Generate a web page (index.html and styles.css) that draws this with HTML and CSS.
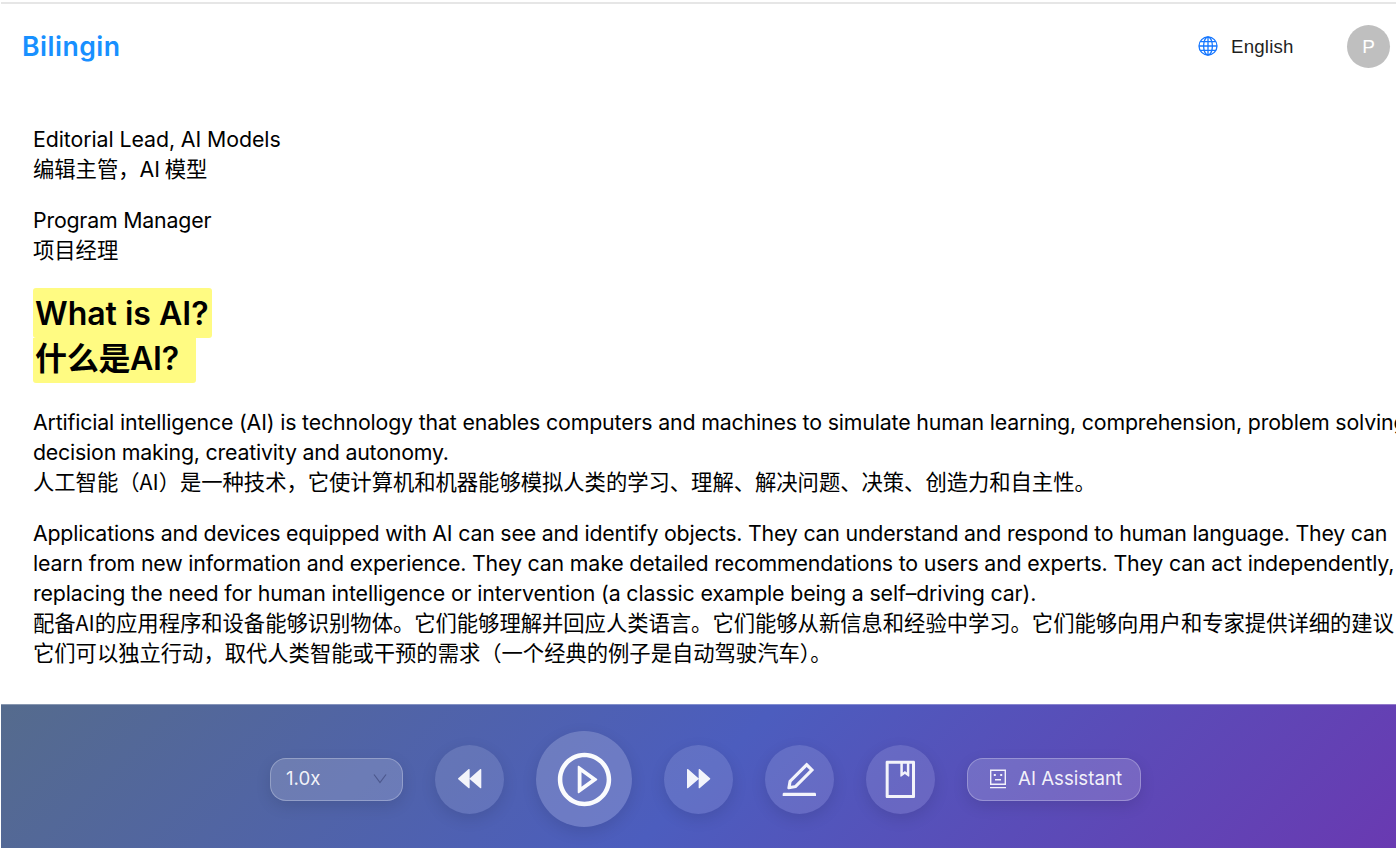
FILE: index.html
```html
<!DOCTYPE html>
<html lang="en">
<head>
  <meta charset="UTF-8" />
  <meta name="viewport" content="width=device-width, initial-scale=1" />
  <title>Bilingin</title>
  <link rel="stylesheet" href="styles.css">
</head>
<body>
  <div class="page">

    <header class="topbar">
      <a class="logo">Bilingin</a>
      <div class="topbar-right">
        <svg class="globe" viewBox="0 0 20 20" fill="none" stroke="currentColor" stroke-width="1.3">
          <circle cx="10" cy="10" r="9"/>
          <ellipse cx="10" cy="10" rx="4.4" ry="9"/>
          <path d="M10 1v18M1 10h18M2.6 5.6h14.8M2.6 14.4h14.8"/>
        </svg>
        <span class="language">English</span>
        <span class="avatar">P</span>
      </div>
    </header>

    <main class="article">
      <p>
        <span class="line l1">Editorial Lead, AI Models</span>
        <span class="line zh">编辑主管，<span class="ai">AI</span> 模型</span>
      </p>
      <p>
        <span class="line l2">Program Manager</span>
        <span class="line zh">项目经理</span>
      </p>
      <h2>
        <span class="mark mark-en">What is AI?</span>
        <span class="mark mark-zh">什么是AI?</span>
      </h2>
      <p>
        <span class="line l3">Artificial intelligence (AI) is technology that enables computers and machines to simulate human learning, comprehension, problem solving,</span>
        <span class="line l4">decision making, creativity and autonomy.</span>
        <span class="line zh">人工智能（AI）是一种技术，它使计算机和机器能够模拟人类的学习、理解、解决问题、决策、创造力和自主性。</span>
      </p>
      <p>
        <span class="line l5">Applications and devices equipped with AI can see and identify objects. They can understand and respond to human language. They can</span>
        <span class="line l6">learn from new information and experience. They can make detailed recommendations to users and experts. They can act independently,</span>
        <span class="line l7">replacing the need for human intelligence or intervention (a classic example being a self–driving car).</span>
        <span class="line zh">配备AI的应用程序和设备能够识别物体。它们能够理解并回应人类语言。它们能够从新信息和经验中学习。它们能够向用户和专家提供详细的建议</span>
        <span class="line zh">它们可以独立行动，取代人类智能或干预的需求（一个经典的例子是自动驾驶汽车）。</span>
      </p>
    </main>

    <footer class="player">
      <button class="speed">
        <span>1.0x</span>
        <svg viewBox="0 0 14 12" fill="none" stroke="currentColor" stroke-width="1.2"><path d="M1 1.5l6 8 6-8"/></svg>
      </button>
      <button class="round">
        <svg class="icon-skip" viewBox="0 0 1024 1024"><path d="M485.6 249.9L198.2 498c-8.3 7.1-8.3 20.8 0 27.9l287.4 248.2c10.7 9.2 26.4.9 26.4-14V263.8c0-14.8-15.7-23.2-26.4-13.9zm320 0L518.2 498a18.6 18.6 0 00-6.2 14c0 5.2 2.1 10.4 6.2 14l287.4 248.2c10.7 9.2 26.4.9 26.4-14V263.8c0-14.8-15.7-23.2-26.4-13.9z"/></svg>
      </button>
      <button class="round play">
        <svg class="icon-play" viewBox="0 0 1024 1024"><path d="M512 64C264.6 64 64 264.6 64 512s200.6 448 448 448 448-200.6 448-448S759.4 64 512 64zm0 820c-205.4 0-372-166.6-372-372s166.6-372 372-372 372 166.6 372 372-166.6 372-372 372z"/><path d="M719.4 499.1l-296.1-215A15.9 15.9 0 00398 297v430c0 13.1 14.8 20.5 25.3 12.9l296.1-215a15.9 15.9 0 000-25.8zm-257.6 134V390.9L628.5 512 461.8 633.1z"/></svg>
      </button>
      <button class="round">
        <svg class="icon-skip flip" viewBox="0 0 1024 1024"><path d="M485.6 249.9L198.2 498c-8.3 7.1-8.3 20.8 0 27.9l287.4 248.2c10.7 9.2 26.4.9 26.4-14V263.8c0-14.8-15.7-23.2-26.4-13.9zm320 0L518.2 498a18.6 18.6 0 00-6.2 14c0 5.2 2.1 10.4 6.2 14l287.4 248.2c10.7 9.2 26.4.9 26.4-14V263.8c0-14.8-15.7-23.2-26.4-13.9z"/></svg>
      </button>
      <button class="round">
        <svg class="icon-tool" viewBox="0 0 1024 1024"><path d="M257.7 752c2 0 4-.2 6-.5L431.9 722c2-.4 3.9-1.3 5.3-2.8l423.9-423.9a9.96 9.96 0 000-14.1L694.9 114.9c-1.9-1.9-4.4-2.9-7.1-2.9s-5.2 1-7.1 2.9L256.8 538.8c-1.5 1.5-2.4 3.3-2.8 5.3l-29.5 168.2a33.5 33.5 0 009.4 29.8c6.6 6.4 14.9 9.9 23.8 9.9zm67.4-174.4L687.8 215l73.3 73.3-362.7 362.6-88.9 15.7 15.6-89zM880 836H144c-17.7 0-32 14.3-32 32v36c0 4.4 3.6 8 8 8h784c4.4 0 8-3.6 8-8v-36c0-17.7-14.3-32-32-32z"/></svg>
      </button>
      <button class="round">
        <svg class="icon-tool" viewBox="0 0 1024 1024"><path d="M832 64H192c-17.7 0-32 14.3-32 32v832c0 17.7 14.3 32 32 32h640c17.7 0 32-14.3 32-32V96c0-17.7-14.3-32-32-32zm-260 72h96v209.9L621.5 312 572 347.4V136zm220 752H232V136h280v296.9c0 3.3 1 6.6 3 9.3a15.9 15.9 0 0022.3 3.7l83.8-59.9 81.4 59.4c2.7 2 6 3.1 9.4 3.1 8.8 0 16-7.2 16-16V136h64v752z"/></svg>
      </button>
      <button class="assistant">
        <svg class="icon-robot" viewBox="0 0 18 20" fill="none" stroke="currentColor" stroke-width="1.4">
          <path d="M1.7 1.2h14.6v14H1.7zM1 18.6h16M6 10.7h6"/>
          <path d="M4.8 6h2M11.2 6h2" stroke-width="2"/>
        </svg>
        <span>AI Assistant</span>
      </button>
    </footer>

  </div>
</body>
</html>
```
FILE: styles.css
```css
*{box-sizing:border-box;margin:0;padding:0}
html,body{height:100%;overflow:hidden}
body{
  background:#fff;
  color:#000;
  font-family:Inter,"Noto Sans CJK SC",sans-serif;
}
.page{
  width:1409px;
  height:848px;
  margin-left:1px;
  padding-top:2px;
  display:flex;
  flex-direction:column;
}

/* header */
.topbar{
  height:87px;
  border-top:2px solid #e6e6e6;
  padding:0 20px 0 21px;
  display:flex;
  align-items:center;
  justify-content:space-between;
}
.logo{
  color:#1890ff;
  font:600 26.6px/40px Inter,sans-serif;
  letter-spacing:.5px;
  padding-bottom:1px;
}
.topbar-right{display:flex;align-items:center;padding-bottom:1px}
.globe{width:20px;height:20px;color:#1677ff;margin-right:13px}
.language{
  width:63px;
  margin-right:53px;
  color:#1f1f1f;
  font:18.7px/25px "Liberation Sans",Arial,sans-serif;
  letter-spacing:.2px;
  white-space:nowrap;
}
.avatar{
  width:43px;
  height:43px;
  border-radius:50%;
  background:#bfbfbf;
  color:#fff;
  font:19px/43px "Liberation Sans",Arial,sans-serif;
  text-align:center;
}

/* bilingual text */
.article{flex:1;padding:35px 32px 0}
.article p{margin-bottom:21px}
.line{
  display:block;
  height:30px;
  font-size:21.33px;
  line-height:30px;
  white-space:nowrap;
}
.l1{letter-spacing:-.08px}
.l2{letter-spacing:-.2px}
.l3{letter-spacing:-.165px}
.l4{letter-spacing:-.2px}
.l5{letter-spacing:-.2px}
.l6{letter-spacing:-.17px}
.l7{letter-spacing:-.137px}
.zh{
  font-family:"Noto Sans CJK SC",sans-serif;
  line-height:28px;
  letter-spacing:-.03px;
}
.ai{font-family:Inter,sans-serif;letter-spacing:0}
h2{
  display:flex;
  flex-direction:column;
  align-items:flex-start;
  margin:23px 0 24px;
}
.mark{
  background:#fffb82;
  padding:0 2px;
  border-radius:3px;
  font-size:32px;
  font-weight:600;
  white-space:nowrap;
}
.mark-en{width:179px;height:50px;line-height:51px}
.mark-zh{
  width:163px;
  height:45px;
  line-height:41px;
  letter-spacing:-.3px;
  border-top-left-radius:0;
  border-top-right-radius:0;
}

/* player controls */
.player{
  height:144px;
  padding-top:5px;
  display:flex;
  align-items:center;
  justify-content:center;
  gap:32px;
  border-top:1px solid rgba(255,255,255,.3);
  background:linear-gradient(135deg,#556b8d 0%,#4c5dbe 50%,#6a39b1 100%) border-box;
}
.player button{
  border:none;
  color:rgba(255,255,255,.92);
  font:18.7px/24px Inter,sans-serif;
  box-shadow:0 5px 16px rgba(0,0,0,.11);
}
.player svg{display:block}
.round{
  width:69px;
  height:69px;
  border-radius:50%;
  background:rgba(255,255,255,.12);
  display:flex;
  align-items:center;
  justify-content:center;
}
.round svg{fill:currentColor}
.player .play{
  width:96px;
  height:96px;
  background:rgba(255,255,255,.18);
  color:rgba(255,255,255,.97);
}
.icon-skip{width:37.3px;height:37.3px}
.icon-play{width:61px;height:61px}
.icon-tool{width:42.7px;height:42.7px}
.flip{transform:scaleX(-1)}
.player .speed,.player .assistant{
  height:43px;
  border:1px solid rgba(255,255,255,.27);
  border-radius:16px;
  background:rgba(255,255,255,.16);
  display:flex;
  align-items:center;
}
.speed{width:133px;padding:0 15px;justify-content:space-between}
.speed svg{width:14px;height:12px;color:rgba(30,35,80,.4)}
.player .assistant{width:174px;padding:0 18px 0 21px;gap:11px;white-space:nowrap}
.icon-robot{width:18px;height:20px;flex:none}
```
